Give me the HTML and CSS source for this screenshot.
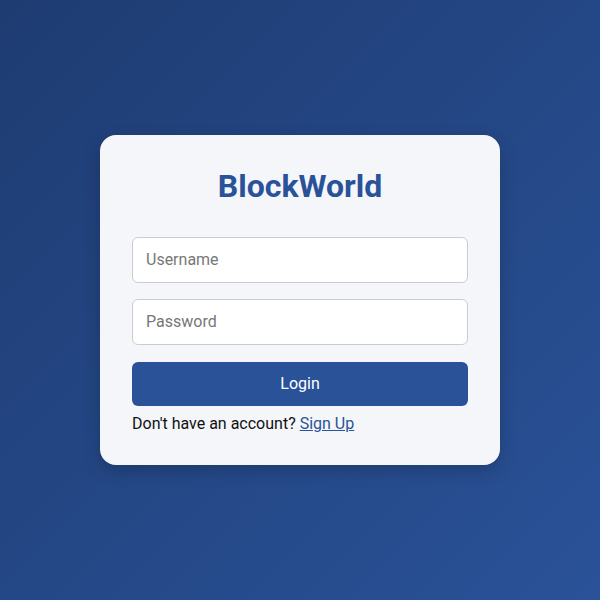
FILE: index.html
```html
<!DOCTYPE html>
<html>
<head>
<meta charset="utf-8">
<link rel="stylesheet" href="styles.css">
</head>
<body>
<div class="page">
  <form class="card">
    <h1 class="title">BlockWorld</h1>
    <div class="fields">
      <input class="field" type="text" placeholder="Username">
      <input class="field" type="password" placeholder="Password">
    </div>
    <button class="btn" type="button">Login</button>
    <p class="note">Don't have an account? <a class="link" href="#">Sign Up</a></p>
  </form>
</div>
</body>
</html>
```
FILE: styles.css
```css
html, body {
  margin: 0;
  padding: 0;
  height: 100%;
}
body {
  font-family: Roboto, "Liberation Sans", sans-serif;
  background: linear-gradient(135deg, #1e3c72, #2a5298);
}
.page {
  height: 100%;
  display: flex;
  align-items: center;
  justify-content: center;
}
.card {
  width: 336px;
  padding: 33px 32px 32px;
  background: #f4f6fa;
  border-radius: 16px;
  box-shadow: 0 6px 18px rgba(0, 0, 0, 0.2);
  display: flex;
  flex-direction: column;
}
.title {
  margin: 0 0 31px;
  font-size: 32px;
  font-weight: 700;
  color: #2a5298;
  text-align: center;
  line-height: 37.5px;
}
.fields {
  display: flex;
  flex-direction: column;
  gap: 16px;
}
.field {
  box-sizing: border-box;
  height: 46px;
  padding: 0 13px;
  font-family: inherit;
  font-size: 16px;
  border: 1px solid #c9cdd3;
  border-radius: 6px;
  background: #fff;
  color: #333;
  outline: none;
}
.field::placeholder {
  color: #777;
}
.btn {
  margin-top: 17px;
  height: 44px;
  border: none;
  border-radius: 6px;
  background: #2a5298;
  color: #fff;
  font-family: inherit;
  font-size: 16px;
}
.note {
  margin: 8px 0 0;
  font-size: 16px;
  line-height: 19px;
  color: #111;
}
.link {
  color: #2a5298;
  text-decoration: underline;
}
```
